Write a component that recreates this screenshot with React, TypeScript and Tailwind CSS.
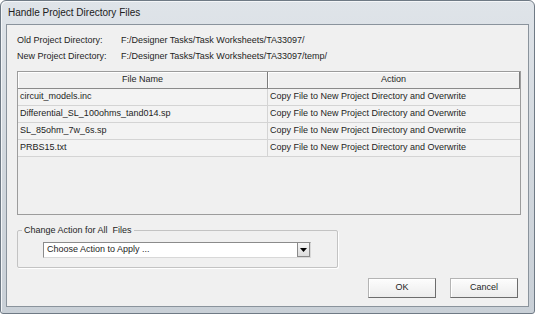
const files = [
    'circuit_models.inc',
    'Differential_SL_100ohms_tand014.sp',
    'SL_85ohm_7w_6s.sp',
    'PRBS15.txt',
];

export default function App() {
    return (
        <div className="w-[539px] h-[316px] bg-white font-['Liberation_Sans',Arial,sans-serif] text-[#1e1e1e]">
            {/* Window frame */}
            <div className="w-[535px] h-[314px] rounded-t-[6px] rounded-b-[3px] border border-[#6f7a85] bg-gradient-to-b from-[#dfe4e9] via-[#d2d8de] to-[#c9d0d7] shadow-[inset_1px_1px_0_#f4f6f8] flex flex-col">
                <div className="h-[23px] pl-[7px] flex items-center text-[10px] text-[#202020]">
                    Handle Project Directory Files
                </div>

                {/* Client area */}
                <div className="mx-[5px] mb-[6px] flex-1 border border-[#8a939c] bg-[#f0f0f0] flex flex-col px-[10px] pt-[8px] text-[9px]">
                    <div className="h-[16px] flex items-center">
                        <span className="w-[104px]">Old Project Directory:</span>
                        <span>F:/Designer Tasks/Task Worksheets/TA33097/</span>
                    </div>
                    <div className="h-[16px] flex items-center">
                        <span className="w-[104px]">New Project Directory:</span>
                        <span>F:/Designer Tasks/Task Worksheets/TA33097/temp/</span>
                    </div>

                    {/* File table */}
                    <div className="mt-[6px] w-[504px] h-[144px] border border-[#9c9c9c] bg-[#f0f0f0] flex flex-col">
                        <div className="h-[17px] flex border-b border-[#8a8a8a]">
                            <div className="w-[250px] border-r border-[#7c7c7c] shadow-[inset_1px_1px_0_#ffffff] flex items-center justify-center">
                                File Name
                            </div>
                            <div className="flex-1 border-r border-[#7c7c7c] shadow-[inset_1px_1px_0_#ffffff] flex items-center justify-center">
                                Action
                            </div>
                        </div>
                        {files.map((f) => (
                            <div key={f} className="h-[17px] flex border-b border-[#d4d4d4] bg-[#f3f3f3]">
                                <div className="w-[250px] border-r border-[#d4d4d4] pl-[2px] flex items-center">{f}</div>
                                <div className="flex-1 pl-[2px] flex items-center">Copy File to New Project Directory and Overwrite</div>
                            </div>
                        ))}
                    </div>

                    {/* Change action group */}
                    <fieldset className="mt-[9px] w-[321px] h-[44px] border border-[#c3c3c3] rounded-[2px] shadow-[1px_1px_0_#ffffff]">
                        <legend className="ml-[4px] px-[2px] leading-[12px]">Change Action for All&nbsp; Files</legend>
                        <div className="mt-[6px] ml-[25px] w-[268px] h-[16px] bg-white border border-[#8b8b8b] border-r-[#d8d8d8] border-b-[#d8d8d8] flex items-center">
                            <span className="flex-1 pl-[3px]">Choose Action to Apply ...</span>
                            <div className="w-[13px] h-[14px] bg-gradient-to-b from-[#f6f6f6] to-[#dcdcdc] border-l border-r border-b border-[#8a8a8a] flex items-center justify-center">
                                <svg width="7" height="4" viewBox="0 0 7 4"><polygon points="0,0 7,0 3.5,4" fill="#000" /></svg>
                            </div>
                        </div>
                    </fieldset>

                    {/* Buttons */}
                    <div className="mt-auto mb-[8px] flex justify-end gap-[14px]">
                        {['OK', 'Cancel'].map((b) => (
                            <button
                                key={b}
                                className="w-[68px] h-[20px] border border-[#b4b4b4] border-r-[#6c6c6c] border-b-[#6c6c6c] bg-gradient-to-b from-[#fdfdfd] to-[#ececec] shadow-[inset_1px_1px_0_#ffffff] text-[9px] flex items-center justify-center"
                            >
                                {b}
                            </button>
                        ))}
                    </div>
                </div>
            </div>
        </div>
    );
}
